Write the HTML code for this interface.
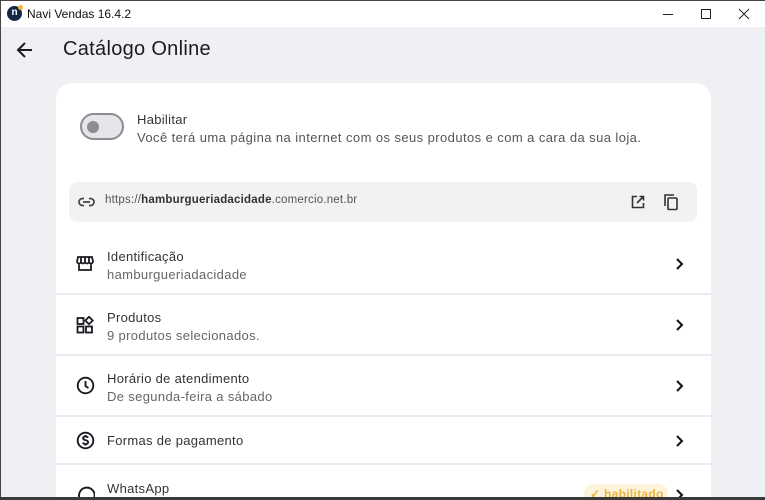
<!DOCTYPE html>
<html style="height:500px;overflow:hidden"><head><meta charset="utf-8"><style>
*{margin:0;padding:0;box-sizing:border-box}
body{width:765px;height:500px;overflow:hidden;background:#eff0f4;font-family:"Liberation Sans",sans-serif;position:relative;color:#222}
.tb{position:absolute;left:0;top:0;width:765px;height:27px;background:#fff;border-top:1px solid #444}
.tb .t{position:absolute;left:27px;top:6px;font-size:12px;color:#111}
.logo{position:absolute;left:7px;top:5px;width:15px;height:15px;border-radius:50%;background:#152848;color:#fff;font-size:10px;font-weight:bold;text-align:center;line-height:14px}
.logo:after{content:"";position:absolute;right:-1px;top:-1px;width:5px;height:5px;border-radius:50%;background:#f4b73a}
.lb{position:absolute;left:0;top:0;width:1px;height:500px;background:#444}
.bb{position:absolute;left:0;top:497px;width:765px;height:3px;background:#3a3a3a}
h1{position:absolute;left:63px;top:38px;font-size:20px;font-weight:normal;color:#1a1a22;letter-spacing:0.3px}
.card{position:absolute;left:56px;top:83px;width:655px;height:417px;background:#fff;border-radius:16px 16px 0 0;overflow:hidden}
.sw{position:absolute;left:24px;top:30px;width:44px;height:27px;border-radius:14px;background:#e5e5ea;border:2px solid #8c8c92}
.sw:after{content:"";position:absolute;left:5px;top:6px;width:12px;height:12px;border-radius:50%;background:#8c8c92}
.hab{position:absolute;left:81px;top:29px;font-size:13px;color:#333;letter-spacing:0.3px}
.desc{position:absolute;left:81px;top:47px;font-size:13px;color:#555;letter-spacing:0.42px}
.url{position:absolute;left:13px;top:99px;width:628px;height:40px;background:#f2f2f4;border-radius:8px}
.url .u{position:absolute;left:36px;top:12px;font-size:11.5px;color:#555;letter-spacing:0.2px}
.url .u b{color:#333}
.row{position:absolute;left:0;width:655px;border-bottom:2px solid #ececee}
.row .ic{position:absolute;left:20px}
.row .a{position:absolute;left:51px;font-size:13px;color:#333;letter-spacing:0.3px}
.row .b{position:absolute;left:51px;font-size:13px;color:#666;letter-spacing:0.35px}
.chev{position:absolute;left:619px}
.badge{position:absolute;left:528px;top:19px;width:84px;height:20px;border-radius:10px;background:#fdf2da;color:#eab33d;font-size:12px;font-weight:bold;padding:3px 0 0 6px;letter-spacing:0.3px}
</style></head><body>
<div class="tb"><div class="logo">n</div><div class="t">Navi Vendas 16.4.2</div>
<svg style="position:absolute;left:660px;top:7px" width="95" height="13" viewBox="0 0 95 13" fill="none" stroke="#222" stroke-width="1"><path d="M3 6.5h10"/><rect x="41.5" y="1.5" width="9" height="9"/><path d="M79 1l10 10M89 1L79 11"/></svg></div>
<div class="lb"></div>
<svg style="position:absolute;left:16px;top:41px" width="18" height="18" viewBox="0 0 18 18" fill="none" stroke="#1a1a22" stroke-width="2"><path d="M16 9H3M9 2L2 9l7 7"/></svg>
<h1>Catálogo Online</h1>
<div class="card">
<div class="sw"></div>
<div class="hab">Habilitar</div>
<div class="desc">Você terá uma página na internet com os seus produtos e com a cara da sua loja.</div>
<div class="url">
<svg style="position:absolute;left:9px;top:13px" width="17" height="14" viewBox="0 0 17 14" fill="none" stroke="#444" stroke-width="1.7"><path d="M6 3.5H4.5a3.5 3.5 0 000 7H6M11 3.5h1.5a3.5 3.5 0 010 7H11M5 7h7"/></svg>
<div class="u">https://<b>hamburgueriadacidade</b>.comercio.net.br</div>
<svg style="position:absolute;left:561px;top:12px" width="16" height="16" viewBox="0 0 16 16" fill="none" stroke="#333" stroke-width="1.6"><path d="M7 2.5H2.5v11h11V9M9.5 2.5h4v4M13.5 2.5L7 9"/></svg>
<svg style="position:absolute;left:594px;top:11px" width="16" height="18" viewBox="0 0 16 18" fill="none" stroke="#333" stroke-width="1.6"><path d="M2 13V2h9"/><rect x="5" y="5" width="9" height="11.5" rx="1"/></svg>
</div>
<div class="row" style="top:151px;height:61px">
<svg class="ic" style="top:21px" width="18" height="17" viewBox="0 0 18 17" fill="none" stroke="#1a1a22" stroke-width="1.8"><path d="M2 2h14l1 4.5a2 2 0 01-4 0 2 2 0 01-4 0 2 2 0 01-4 0 2 2 0 01-4 0z M3 8v7h12V8"/><path d="M5 2v4.5M9 2v4.5M13 2v4.5"/></svg>
<div class="a" style="top:15px">Identificação</div><div class="b" style="top:33px">hamburgueriadacidade</div>
<svg class="chev" style="top:23px" width="10" height="14" viewBox="0 0 10 14" fill="none" stroke="#111" stroke-width="2"><path d="M2 2l5 5-5 5"/></svg></div>
<div class="row" style="top:212px;height:61px">
<svg class="ic" style="top:21px" width="18" height="18" viewBox="0 0 18 18" fill="none" stroke="#1a1a22" stroke-width="1.8"><rect x="1.5" y="2" width="6" height="6"/><rect x="1.5" y="10.5" width="6" height="6"/><rect x="10" y="10.5" width="6" height="6"/><path d="M13 0.8L16.7 4.5 13 8.2 9.3 4.5z"/></svg>
<div class="a" style="top:15px">Produtos</div><div class="b" style="top:33px">9 produtos selecionados.</div>
<svg class="chev" style="top:23px" width="10" height="14" viewBox="0 0 10 14" fill="none" stroke="#111" stroke-width="2"><path d="M2 2l5 5-5 5"/></svg></div>
<div class="row" style="top:273px;height:61px">
<svg class="ic" style="top:20px" width="19" height="19" viewBox="0 0 19 19" fill="none" stroke="#1a1a22" stroke-width="1.9"><circle cx="9.5" cy="9.5" r="7.8"/><path d="M9.5 5v5l3 2"/></svg>
<div class="a" style="top:15px">Horário de atendimento</div><div class="b" style="top:33px">De segunda-feira a sábado</div>
<svg class="chev" style="top:23px" width="10" height="14" viewBox="0 0 10 14" fill="none" stroke="#111" stroke-width="2"><path d="M2 2l5 5-5 5"/></svg></div>
<div class="row" style="top:334px;height:48px">
<svg class="ic" style="top:14px" width="19" height="19" viewBox="0 0 19 19" fill="none" stroke="#1a1a22" stroke-width="1.9"><circle cx="9.5" cy="9.5" r="7.8"/><path d="M12 6.8c-.5-1-1.5-1.4-2.5-1.4-1.3 0-2.4.7-2.4 1.8 0 2.5 5 1.3 5 4 0 1.1-1.1 1.9-2.6 1.9-1.2 0-2.1-.5-2.6-1.5M9.5 4v1.4M9.5 13.1v1.5"/></svg>
<div class="a" style="top:16px">Formas de pagamento</div>
<svg class="chev" style="top:17px" width="10" height="14" viewBox="0 0 10 14" fill="none" stroke="#111" stroke-width="2"><path d="M2 2l5 5-5 5"/></svg></div>
<div class="row" style="top:382px;height:35px;border:none">
<svg class="ic" style="top:21px" width="19" height="19" viewBox="0 0 19 19" fill="none" stroke="#1a1a22" stroke-width="1.9"><path d="M3 16.5l1-3.3A7.8 7.8 0 1 1 6.6 16z"/></svg>
<div class="a" style="top:16px">WhatsApp</div>
<div class="badge">✓ habilitado</div>
<svg class="chev" style="top:23px" width="10" height="14" viewBox="0 0 10 14" fill="none" stroke="#111" stroke-width="2"><path d="M2 2l5 5-5 5"/></svg></div>
</div>
<div class="bb"></div>
</body></html>
